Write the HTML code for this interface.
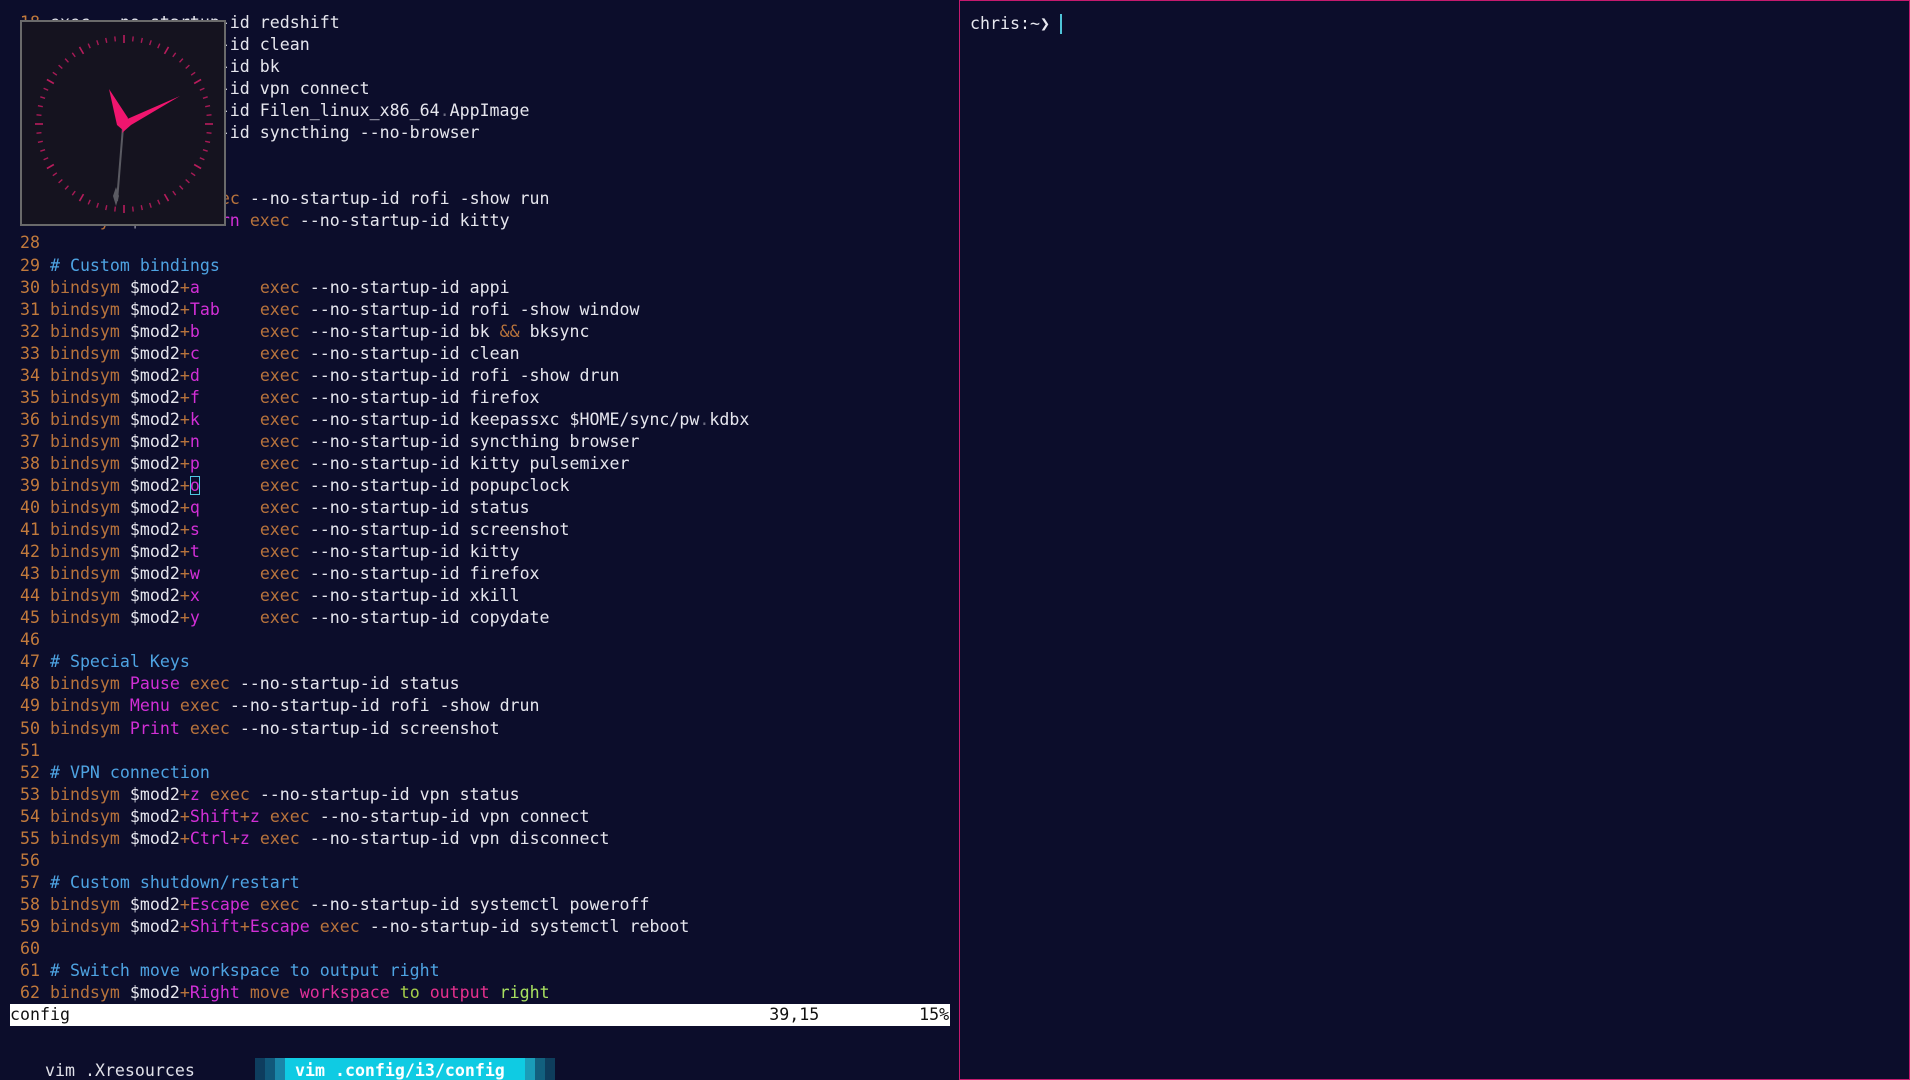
<!DOCTYPE html>
<html><head><meta charset="utf-8"><style>
html,body{margin:0;padding:0;width:1910px;height:1080px;overflow:hidden;background:#0c0d2b;}
body{position:relative;font-family:"DejaVu Sans Mono","Liberation Mono",monospace;}
pre{position:absolute;left:10px;top:12px;margin:0;font-family:"DejaVu Sans Mono","Liberation Mono",monospace;font-size:16.6px;line-height:22.04px;color:#e6e6ee;}
.n{color:#c27a3c}.k{color:#b8733c}.m{color:#d22fd6}.p{color:#b8733c}.c{color:#4ea3e2}.d{color:#6a6a80}
.ws{color:#e0309a}.to{color:#a6d04a}.out{color:#e8308e}.rt{color:#a8e060}
#status{position:absolute;left:10px;top:1004px;width:940px;height:22px;background:#fff;color:#111;font-size:16.6px;line-height:22px;white-space:pre;}
#right{position:absolute;left:959px;top:0;width:949px;height:1078px;border:1px solid #c51a6e;}
#clock{position:absolute;left:20px;top:20px;width:202px;height:202px;border:2px solid #6a6a6a;background:#15131f;}
.tab{position:absolute;top:1059px;height:22px;font-size:16.6px;line-height:24px;white-space:pre;}
.cur{outline:1.5px solid #4fc8e0;outline-offset:-1px}
</style></head><body>
<pre><span class="n"> 18 </span>exec --no-startup-id redshift
<span class="n"> 19 </span>exec --no-startup-id clean
<span class="n"> 20 </span>exec --no-startup-id bk
<span class="n"> 21 </span>exec --no-startup-id vpn connect
<span class="n"> 22 </span>exec --no-startup-id Filen_linux_x86_64<span class="d">.</span>AppImage
<span class="n"> 23 </span>exec --no-startup-id syncthing --no-browser
<span class="n"> 24 </span>
<span class="n"> 25 </span>
<span class="n"> 26 </span><span class="k">bindsym</span> $mod<span class="p">+</span><span class="m">d</span> <span class="k">exec</span> --no-startup-id rofi -show run
<span class="n"> 27 </span><span class="k">bindsym</span> $mod<span class="p">+</span><span class="m">Return</span> <span class="k">exec</span> --no-startup-id kitty
<span class="n"> 28 </span>
<span class="n"> 29 </span><span class="c"># Custom bindings</span>
<span class="n"> 30 </span><span class="k">bindsym</span> $mod2<span class="p">+</span><span class="m">a</span>      <span class="k">exec</span> --no-startup-id appi
<span class="n"> 31 </span><span class="k">bindsym</span> $mod2<span class="p">+</span><span class="m">Tab</span>    <span class="k">exec</span> --no-startup-id rofi -show window
<span class="n"> 32 </span><span class="k">bindsym</span> $mod2<span class="p">+</span><span class="m">b</span>      <span class="k">exec</span> --no-startup-id bk <span class="k">&amp;&amp;</span> bksync
<span class="n"> 33 </span><span class="k">bindsym</span> $mod2<span class="p">+</span><span class="m">c</span>      <span class="k">exec</span> --no-startup-id clean
<span class="n"> 34 </span><span class="k">bindsym</span> $mod2<span class="p">+</span><span class="m">d</span>      <span class="k">exec</span> --no-startup-id rofi -show drun
<span class="n"> 35 </span><span class="k">bindsym</span> $mod2<span class="p">+</span><span class="m">f</span>      <span class="k">exec</span> --no-startup-id firefox
<span class="n"> 36 </span><span class="k">bindsym</span> $mod2<span class="p">+</span><span class="m">k</span>      <span class="k">exec</span> --no-startup-id keepassxc $HOME/sync/pw<span class="d">.</span>kdbx
<span class="n"> 37 </span><span class="k">bindsym</span> $mod2<span class="p">+</span><span class="m">n</span>      <span class="k">exec</span> --no-startup-id syncthing browser
<span class="n"> 38 </span><span class="k">bindsym</span> $mod2<span class="p">+</span><span class="m">p</span>      <span class="k">exec</span> --no-startup-id kitty pulsemixer
<span class="n"> 39 </span><span class="k">bindsym</span> $mod2<span class="p">+</span><span class="m cur">o</span>      <span class="k">exec</span> --no-startup-id popupclock
<span class="n"> 40 </span><span class="k">bindsym</span> $mod2<span class="p">+</span><span class="m">q</span>      <span class="k">exec</span> --no-startup-id status
<span class="n"> 41 </span><span class="k">bindsym</span> $mod2<span class="p">+</span><span class="m">s</span>      <span class="k">exec</span> --no-startup-id screenshot
<span class="n"> 42 </span><span class="k">bindsym</span> $mod2<span class="p">+</span><span class="m">t</span>      <span class="k">exec</span> --no-startup-id kitty
<span class="n"> 43 </span><span class="k">bindsym</span> $mod2<span class="p">+</span><span class="m">w</span>      <span class="k">exec</span> --no-startup-id firefox
<span class="n"> 44 </span><span class="k">bindsym</span> $mod2<span class="p">+</span><span class="m">x</span>      <span class="k">exec</span> --no-startup-id xkill
<span class="n"> 45 </span><span class="k">bindsym</span> $mod2<span class="p">+</span><span class="m">y</span>      <span class="k">exec</span> --no-startup-id copydate
<span class="n"> 46 </span>
<span class="n"> 47 </span><span class="c"># Special Keys</span>
<span class="n"> 48 </span><span class="k">bindsym</span> <span class="m">Pause</span> <span class="k">exec</span> --no-startup-id status
<span class="n"> 49 </span><span class="k">bindsym</span> <span class="m">Menu</span> <span class="k">exec</span> --no-startup-id rofi -show drun
<span class="n"> 50 </span><span class="k">bindsym</span> <span class="m">Print</span> <span class="k">exec</span> --no-startup-id screenshot
<span class="n"> 51 </span>
<span class="n"> 52 </span><span class="c"># VPN connection</span>
<span class="n"> 53 </span><span class="k">bindsym</span> $mod2<span class="p">+</span><span class="m">z</span> <span class="k">exec</span> --no-startup-id vpn status
<span class="n"> 54 </span><span class="k">bindsym</span> $mod2<span class="p">+</span><span class="m">Shift</span><span class="p">+</span><span class="m">z</span> <span class="k">exec</span> --no-startup-id vpn connect
<span class="n"> 55 </span><span class="k">bindsym</span> $mod2<span class="p">+</span><span class="m">Ctrl</span><span class="p">+</span><span class="m">z</span> <span class="k">exec</span> --no-startup-id vpn disconnect
<span class="n"> 56 </span>
<span class="n"> 57 </span><span class="c"># Custom shutdown/restart</span>
<span class="n"> 58 </span><span class="k">bindsym</span> $mod2<span class="p">+</span><span class="m">Escape</span> <span class="k">exec</span> --no-startup-id systemctl poweroff
<span class="n"> 59 </span><span class="k">bindsym</span> $mod2<span class="p">+</span><span class="m">Shift</span><span class="p">+</span><span class="m">Escape</span> <span class="k">exec</span> --no-startup-id systemctl reboot
<span class="n"> 60 </span>
<span class="n"> 61 </span><span class="c"># Switch move workspace to output right</span>
<span class="n"> 62 </span><span class="k">bindsym</span> $mod2<span class="p">+</span><span class="m">Right</span> <span class="k">move</span> <span class="ws">workspace</span> <span class="to">to</span> <span class="out">output</span> <span class="rt">right</span></pre>
<div id="status">config                                                                      39,15          15%</div>

<div id="clock">
<svg width="202" height="202" viewBox="21 21 202 202">
<defs>
<line id="t" x1="123" y1="35" x2="123" y2="40" stroke="#a81a56" stroke-width="1.4"/>
<line id="T" x1="123" y1="34" x2="123" y2="42" stroke="#b81c5c" stroke-width="1.6"/>
</defs>
<g>
<use href="#T" transform="rotate(0 123 123)"/><use href="#t" transform="rotate(6 123 123)"/><use href="#t" transform="rotate(12 123 123)"/><use href="#t" transform="rotate(18 123 123)"/><use href="#t" transform="rotate(24 123 123)"/>
<use href="#T" transform="rotate(30 123 123)"/><use href="#t" transform="rotate(36 123 123)"/><use href="#t" transform="rotate(42 123 123)"/><use href="#t" transform="rotate(48 123 123)"/><use href="#t" transform="rotate(54 123 123)"/>
<use href="#T" transform="rotate(60 123 123)"/><use href="#t" transform="rotate(66 123 123)"/><use href="#t" transform="rotate(72 123 123)"/><use href="#t" transform="rotate(78 123 123)"/><use href="#t" transform="rotate(84 123 123)"/>
<use href="#T" transform="rotate(90 123 123)"/><use href="#t" transform="rotate(96 123 123)"/><use href="#t" transform="rotate(102 123 123)"/><use href="#t" transform="rotate(108 123 123)"/><use href="#t" transform="rotate(114 123 123)"/>
<use href="#T" transform="rotate(120 123 123)"/><use href="#t" transform="rotate(126 123 123)"/><use href="#t" transform="rotate(132 123 123)"/><use href="#t" transform="rotate(138 123 123)"/><use href="#t" transform="rotate(144 123 123)"/>
<use href="#T" transform="rotate(150 123 123)"/><use href="#t" transform="rotate(156 123 123)"/><use href="#t" transform="rotate(162 123 123)"/><use href="#t" transform="rotate(168 123 123)"/><use href="#t" transform="rotate(174 123 123)"/>
<use href="#T" transform="rotate(180 123 123)"/><use href="#t" transform="rotate(186 123 123)"/><use href="#t" transform="rotate(192 123 123)"/><use href="#t" transform="rotate(198 123 123)"/><use href="#t" transform="rotate(204 123 123)"/>
<use href="#T" transform="rotate(210 123 123)"/><use href="#t" transform="rotate(216 123 123)"/><use href="#t" transform="rotate(222 123 123)"/><use href="#t" transform="rotate(228 123 123)"/><use href="#t" transform="rotate(234 123 123)"/>
<use href="#T" transform="rotate(240 123 123)"/><use href="#t" transform="rotate(246 123 123)"/><use href="#t" transform="rotate(252 123 123)"/><use href="#t" transform="rotate(258 123 123)"/><use href="#t" transform="rotate(264 123 123)"/>
<use href="#T" transform="rotate(270 123 123)"/><use href="#t" transform="rotate(276 123 123)"/><use href="#t" transform="rotate(282 123 123)"/><use href="#t" transform="rotate(288 123 123)"/><use href="#t" transform="rotate(294 123 123)"/>
<use href="#T" transform="rotate(300 123 123)"/><use href="#t" transform="rotate(306 123 123)"/><use href="#t" transform="rotate(312 123 123)"/><use href="#t" transform="rotate(318 123 123)"/><use href="#t" transform="rotate(324 123 123)"/>
<use href="#T" transform="rotate(330 123 123)"/><use href="#t" transform="rotate(336 123 123)"/><use href="#t" transform="rotate(342 123 123)"/><use href="#t" transform="rotate(348 123 123)"/><use href="#t" transform="rotate(354 123 123)"/>
</g>
<line x1="122" y1="126" x2="116" y2="200" stroke="#5a5a62" stroke-width="2"/>
<polygon points="115,186 118,195 115,205 112,195" fill="#5a5a62"/>
<polygon points="108,88 127,117 123,130 116,124" fill="#f0156e"/>
<polygon points="179,95 130,124 121,132 124,119" fill="#f0156e"/>
</svg>
</div>

<div class="tab" style="left:45px;color:#e0e0e8;">vim .Xresources</div>
<div style="position:absolute;left:255px;top:1058px;width:300px;height:22px;background:linear-gradient(90deg,#0e3d5e 0,#0e3d5e 10px,#11587a 10px,#11587a 20px,#1a86a8 20px,#1a86a8 30px,#0fcbe3 30px,#0fcbe3 270px,#1a9cb8 270px,#1a9cb8 280px,#12607e 280px,#12607e 290px,#0e3d5c 290px);"></div>
<div class="tab" style="left:295px;color:#fff;font-weight:bold;">vim .config/i3/config</div>

<div id="right"></div>
<div style="position:absolute;left:970px;top:13px;font-size:16.6px;line-height:22px;color:#e8e8f0;white-space:pre;">chris:~<b>❯</b></div>
<div style="position:absolute;left:1060px;top:14px;width:2px;height:20px;background:#4fc3d8;"></div>
</body></html>
